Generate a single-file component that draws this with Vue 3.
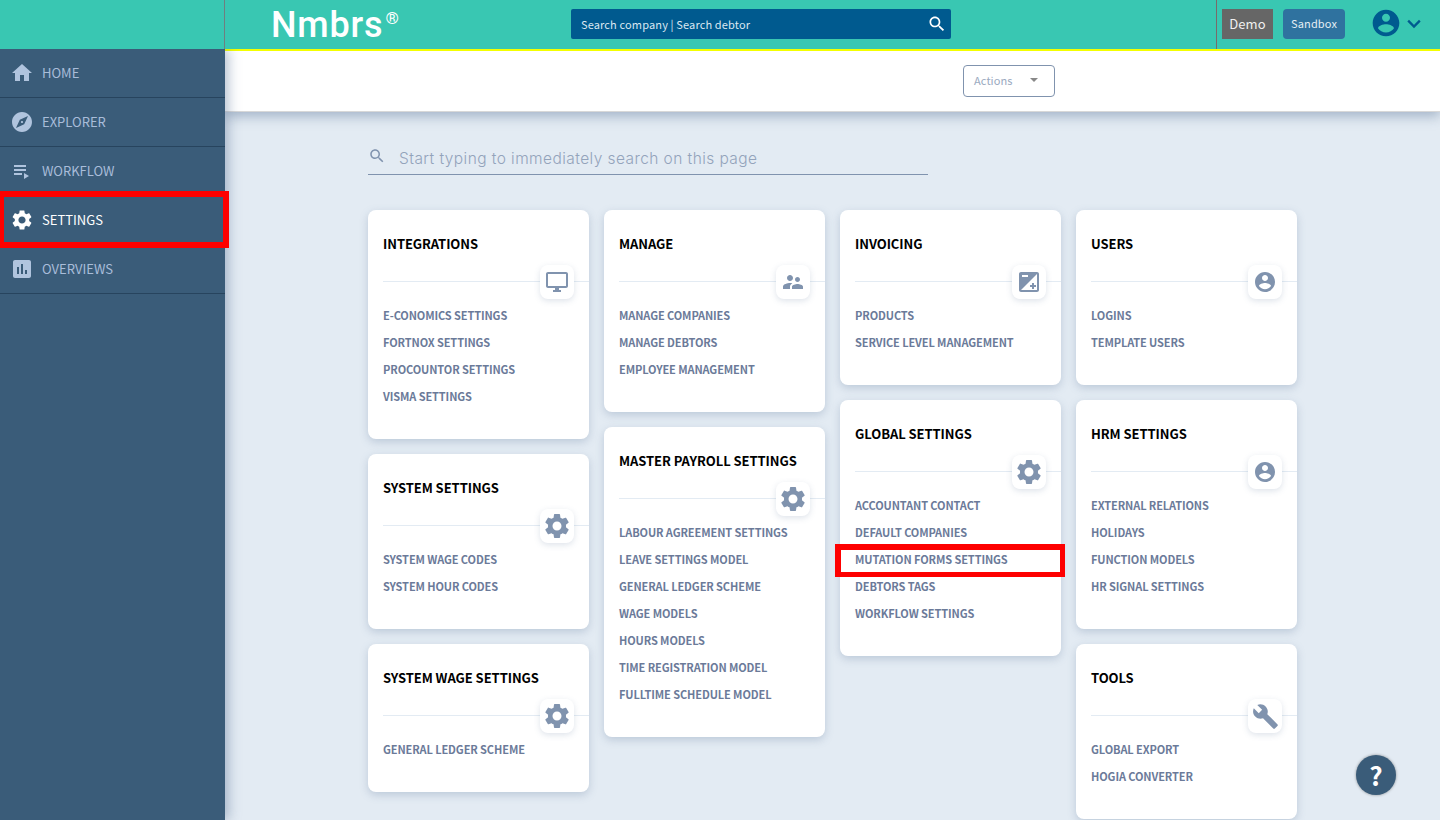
<script setup>
const icons = {
  home: 'M10 20v-6h4v6h5v-8h3L12 3 2 12h3v8z',
  explore: 'M12 10.9c-.61 0-1.1.49-1.1 1.1s.49 1.1 1.1 1.1c.61 0 1.1-.49 1.1-1.1s-.49-1.1-1.1-1.1zM12 2C6.48 2 2 6.48 2 12s4.48 10 10 10 10-4.48 10-10S17.52 2 12 2zm2.19 12.19L6 18l3.81-8.19L18 6l-3.81 8.19z',
  playlist: 'M4 10h12v2H4zm0-4h12v2H4zm0 8h8v2H4zm10 0v6l5-3z',
  settings: 'M19.14 12.94c.04-.3.06-.61.06-.94 0-.32-.02-.64-.07-.94l2.03-1.58c.18-.14.23-.41.12-.61l-1.92-3.32c-.12-.22-.37-.29-.59-.22l-2.39.96c-.5-.38-1.03-.7-1.62-.94l-.36-2.54c-.04-.24-.24-.41-.48-.41h-3.84c-.24 0-.43.17-.47.41l-.36 2.54c-.59.24-1.13.57-1.62.94l-2.39-.96c-.22-.08-.47 0-.59.22L2.74 8.87c-.12.21-.08.47.12.61l2.03 1.58c-.05.3-.09.63-.09.94s.02.64.07.94l-2.03 1.58c-.18.14-.23.41-.12.61l1.92 3.32c.12.22.37.29.59.22l2.39-.96c.5.38 1.03.7 1.62.94l.36 2.54c.05.24.24.41.48.41h3.84c.24 0 .44-.17.47-.41l.36-2.54c.59-.24 1.13-.56 1.62-.94l2.39.96c.22.08.47 0 .59-.22l1.92-3.32c.12-.22.07-.47-.12-.61l-2.01-1.58zM12 15.6c-1.98 0-3.6-1.62-3.6-3.6s1.62-3.6 3.6-3.6 3.6 1.62 3.6 3.6-1.62 3.6-3.6 3.6z',
  chart: 'M19 3H5c-1.1 0-2 .9-2 2v14c0 1.1.9 2 2 2h14c1.1 0 2-.9 2-2V5c0-1.1-.9-2-2-2zM9 17H7v-7h2v7zm4 0h-2V7h2v10zm4 0h-2v-4h2v4z',
  desktop: 'M21 2H3c-1.1 0-2 .9-2 2v12c0 1.1.9 2 2 2h7v2H8v2h8v-2h-2v-2h7c1.1 0 2-.9 2-2V4c0-1.1-.9-2-2-2zm0 14H3V4h18v12z',
  people: 'M16.5 12c1.38 0 2.49-1.12 2.49-2.5S17.88 7 16.5 7C15.12 7 14 8.12 14 9.5s1.12 2.5 2.5 2.5zM9 11c1.66 0 2.99-1.34 2.99-3S10.66 5 9 5C7.34 5 6 6.34 6 8s1.34 3 3 3zm7.5 3c-1.83 0-5.5.92-5.5 2.75V19h11v-2.25c0-1.83-3.67-2.75-5.5-2.75zM9 13c-2.33 0-7 1.17-7 3.5V19h7v-2.25c0-.85.33-2.34 2.37-3.47C10.5 13.1 9.66 13 9 13z',
  exposure: 'M15 17v2h2v-2h2v-2h-2v-2h-2v2h-2v2h2zm5-15H4c-1.1 0-2 .9-2 2v16c0 1.1.9 2 2 2h16c1.1 0 2-.9 2-2V4c0-1.1-.9-2-2-2zM5 5h6v2H5V5zm15 15H4L20 4v16z',
  account: 'M12 2C6.48 2 2 6.48 2 12s4.48 10 10 10 10-4.48 10-10S17.52 2 12 2zm0 3c1.66 0 3 1.34 3 3s-1.34 3-3 3-3-1.34-3-3 1.34-3 3-3zm0 14.2c-2.5 0-4.71-1.28-6-3.22.03-1.99 4-3.08 6-3.08 1.99 0 5.97 1.09 6 3.08-1.29 1.94-3.5 3.22-6 3.22z',
  build: 'M22.7 19l-9.1-9.1c.9-2.3.4-5-1.5-6.9-2-2-5-2.4-7.4-1.3L9 6 6 9 1.6 4.7C.4 7.1.9 10.1 2.9 12.1c1.9 1.9 4.6 2.4 6.9 1.5l9.1 9.1c.4.4 1 .4 1.4 0l2.3-2.3c.5-.4.5-1.1.1-1.4z',
  search: 'M15.5 14h-.79l-.28-.27C15.41 12.59 16 11.11 16 9.5 16 5.91 13.09 3 9.5 3S3 5.91 3 9.5 5.91 16 9.5 16c1.61 0 3.09-.59 4.23-1.57l.27.28v.79l5 4.99L20.49 19l-4.99-5zm-6 0C7.01 14 5 11.99 5 9.5S7.01 5 9.5 5 14 7.01 14 9.5 11.99 14 9.5 14z'
}

const nav = [
  { label: 'HOME', icon: 'home' },
  { label: 'EXPLORER', icon: 'explore' },
  { label: 'WORKFLOW', icon: 'playlist' },
  { label: 'SETTINGS', icon: 'settings', active: true },
  { label: 'OVERVIEWS', icon: 'chart' }
]

const columns = [
  [
    { title: 'INTEGRATIONS', icon: 'desktop', links: ['E-CONOMICS SETTINGS', 'FORTNOX SETTINGS', 'PROCOUNTOR SETTINGS', 'VISMA SETTINGS'] },
    { title: 'SYSTEM SETTINGS', icon: 'settings', links: ['SYSTEM WAGE CODES', 'SYSTEM HOUR CODES'] },
    { title: 'SYSTEM WAGE SETTINGS', icon: 'settings', links: ['GENERAL LEDGER SCHEME'] }
  ],
  [
    { title: 'MANAGE', icon: 'people', links: ['MANAGE COMPANIES', 'MANAGE DEBTORS', 'EMPLOYEE MANAGEMENT'] },
    { title: 'MASTER PAYROLL SETTINGS', icon: 'settings', links: ['LABOUR AGREEMENT SETTINGS', 'LEAVE SETTINGS MODEL', 'GENERAL LEDGER SCHEME', 'WAGE MODELS', 'HOURS MODELS', 'TIME REGISTRATION MODEL', 'FULLTIME SCHEDULE MODEL'] }
  ],
  [
    { title: 'INVOICING', icon: 'exposure', links: ['PRODUCTS', 'SERVICE LEVEL MANAGEMENT'] },
    { title: 'GLOBAL SETTINGS', icon: 'settings', links: ['ACCOUNTANT CONTACT', 'DEFAULT COMPANIES', 'MUTATION FORMS SETTINGS', 'DEBTORS TAGS', 'WORKFLOW SETTINGS'], marked: 'MUTATION FORMS SETTINGS' }
  ],
  [
    { title: 'USERS', icon: 'account', links: ['LOGINS', 'TEMPLATE USERS'] },
    { title: 'HRM SETTINGS', icon: 'account', links: ['EXTERNAL RELATIONS', 'HOLIDAYS', 'FUNCTION MODELS', 'HR SIGNAL SETTINGS'] },
    { title: 'TOOLS', icon: 'build', links: ['GLOBAL EXPORT', 'HOGIA CONVERTER'] }
  ]
]
</script>

<template>
  <div class="app">
    <header class="topbar">
      <div class="corner"></div>
      <div class="brand">Nmbrs<sup>®</sup></div>
      <div class="global-search">
        <span>Search company | Search debtor</span>
        <svg viewBox="0 0 24 24" class="gs-icon"><path :d="icons.search" /></svg>
      </div>
      <div class="top-right">
        <span class="demo">Demo</span>
        <span class="sandbox">Sandbox</span>
        <svg viewBox="0 0 24 24" class="avatar"><path :d="icons.account" /></svg>
        <svg viewBox="0 0 24 24" class="chev"><path d="M5 8l7 7 7-7" /></svg>
      </div>
    </header>

    <div class="body">
      <aside class="sidebar">
        <div v-for="item in nav" :key="item.label" class="nav-item" :class="{ active: item.active }">
          <svg viewBox="0 0 24 24" class="nav-icon"><path :d="icons[item.icon]" /></svg>
          <span class="nav-label">{{ item.label }}</span>
          <i v-if="item.active" class="mark mark-nav"></i>
        </div>
      </aside>

      <main class="main">
        <div class="actionbar">
          <div class="actions"><span class="actions-label">Actions</span><i class="caret"></i></div>
        </div>
        <div class="content">
          <div class="page-search">
            <svg viewBox="0 0 24 24" class="ps-icon"><path :d="icons.search" /></svg>
            <span>Start typing to immediately search on this page</span>
          </div>
          <div class="columns">
            <div v-for="(col, i) in columns" :key="i" class="column">
              <section v-for="card in col" :key="card.title" class="card">
                <h3>{{ card.title }}</h3>
                <div class="rule">
                  <span class="badge">
                    <svg viewBox="0 0 24 24" :class="'ic-' + card.icon"><path :d="icons[card.icon]" /></svg>
                  </span>
                </div>
                <ul>
                  <li v-for="l in card.links" :key="l">
                    {{ l }}
                    <i v-if="card.marked === l" class="mark mark-link"></i>
                  </li>
                </ul>
              </section>
            </div>
          </div>
        </div>
        <div class="help">?</div>
      </main>
    </div>
  </div>
</template>

<style>
html, body { margin: 0; padding: 0; overflow: hidden; }
</style>

<style scoped>
.app {
  width: 1440px;
  height: 820px;
  overflow: hidden;
  display: flex;
  flex-direction: column;
  font-family: "Noto Sans CJK SC", "Noto Sans", sans-serif;
  background: #e3ebf3;
}
.topbar {
  height: 49px;
  flex: none;
  display: flex;
  align-items: stretch;
  background: #39c7b2;
  position: relative;
  z-index: 3;
}
.corner {
  width: 224px;
  flex: none;
  border-right: 1px solid #6f7f80;
}
.brand {
  margin-left: 46px;
  width: 300px;
  flex: none;
  font-family: Roboto, "Noto Sans", sans-serif;
  color: #fff;
  font-size: 36px;
  line-height: 50px;
  font-weight: 500;
  letter-spacing: 0.8px;
}
.brand sup {
  font-size: 17px;
  line-height: 0;
  vertical-align: 13px;
  font-weight: 400;
  margin-left: 2px;
  letter-spacing: 0;
}
.global-search {
  width: 380px;
  height: 30px;
  margin-top: 9px;
  flex: none;
  box-sizing: border-box;
  padding: 0 4px 0 10px;
  background: #005a8f;
  border-radius: 2px;
  display: flex;
  align-items: center;
  justify-content: space-between;
  color: #dbe8f2;
  font-size: 11px;
  letter-spacing: 0.14px;
}
.gs-icon { width: 20px; height: 20px; fill: #fff; }
.top-right {
  margin-left: 265px;
  flex: 1;
  display: flex;
  align-items: flex-start;
  border-left: 1px solid #7a6a6a;
  padding: 9px 0 0 5px;
}
.demo {
  width: 51px;
  height: 30px;
  background: #666;
  color: #f0f0f0;
  font-size: 13px;
  line-height: 30px;
  text-align: center;
  letter-spacing: 0.1px;
}
.sandbox {
  width: 62px;
  height: 30px;
  margin-left: 10px;
  background: #2f729f;
  border-radius: 4px;
  color: #e5eef4;
  font-size: 11px;
  line-height: 28px;
  text-align: center;
  letter-spacing: 0.15px;
}
.avatar { width: 32px; height: 32px; margin: -2px 0 0 25px; fill: #005a8f; flex: none; }
.chev {
  width: 20px;
  height: 20px;
  margin: 5px 0 0 2px;
  fill: none;
  stroke: #005a8f;
  stroke-width: 2.8;
  flex: none;
}

.body { flex: 1; display: flex; min-height: 0; }
.sidebar {
  width: 225px;
  flex: none;
  background: #3a5c79;
  box-shadow: 3px 0 12px rgba(60, 90, 130, 0.4);
  position: relative;
  z-index: 2;
}
.nav-item {
  height: 49px;
  box-sizing: border-box;
  border-bottom: 1px solid #27445e;
  display: flex;
  align-items: center;
  padding-left: 10px;
  color: #a9bdd9;
  font-size: 13px;
  letter-spacing: 0;
  position: relative;
}
.nav-label { margin-bottom: 2px; }
.nav-item.active { color: #fff; }
.nav-icon { width: 24px; height: 24px; margin-right: 8px; fill: #b0c4de; flex: none; }
.nav-item.active .nav-icon { fill: #fff; }
.mark { position: absolute; box-sizing: border-box; border: solid #fe0000; pointer-events: none; }
.mark-nav {
  left: 0;
  top: -5px;
  width: 229px;
  height: 57px;
  border-width: 6px 6px 6px 4px;
}
.main {
  flex: 1;
  min-width: 0;
  position: relative;
  overflow: hidden;
  border-top: 2px solid #f4ff00;
}
.actionbar {
  height: 61px;
  box-sizing: border-box;
  background: #fff;
  border-bottom: 1px solid #d8d8d8;
  box-shadow: 0 4px 12px rgba(60, 90, 130, 0.4);
  padding-left: 738px;
  display: flex;
  align-items: center;
  position: relative;
  z-index: 1;
}
.actions {
  width: 92px;
  height: 32px;
  margin-top: -1px;
  box-sizing: border-box;
  border: 1px solid #8093ae;
  border-radius: 4px;
  display: flex;
  align-items: center;
  padding-left: 10px;
  color: #9aa9c0;
  font-size: 11px;
  letter-spacing: 0.1px;
}
.actions-label { margin-bottom: 2px; }
.caret {
  margin: -1px 0 0 17px;
  border-left: 4px solid transparent;
  border-right: 4px solid transparent;
  border-top: 4px solid #888;
}
.content { padding: 0 0 0 143px; }
.page-search {
  width: 560px;
  height: 63px;
  box-sizing: border-box;
  border-bottom: 1px solid #8093ae;
  display: flex;
  align-items: flex-end;
  padding: 0 0 6px 0;
  color: #93a3bb;
  font-family: Inter, "Open Sans", sans-serif;
  font-size: 15.5px;
  font-weight: 300;
  letter-spacing: 0.43px;
}
.ps-icon { width: 18px; height: 18px; fill: #8093ae; margin: 0 13px 3px 0; flex: none; }
.columns { display: flex; gap: 15px; margin-top: 35px; align-items: flex-start; }
.column { width: 221px; display: flex; flex-direction: column; gap: 15px; }
.card {
  background: #fff;
  border-radius: 8px;
  box-shadow: 0 3px 8px rgba(90, 115, 150, 0.28);
  padding: 24px 0 29px 15px;
  box-sizing: border-box;
}
.card h3 {
  margin: 0;
  font-size: 13px;
  line-height: 20px;
  font-weight: 700;
  letter-spacing: -0.07px;
  color: #000;
}
.rule {
  height: 1px;
  margin-top: 27px;
  background: #e3ebf3;
  position: relative;
}
.badge {
  position: absolute;
  right: 15px;
  top: -16px;
  width: 34px;
  height: 34px;
  border-radius: 8px;
  background: #fff;
  box-shadow: 0 2px 6px rgba(90, 115, 150, 0.2);
  display: flex;
  align-items: center;
  justify-content: center;
}
.badge svg { width: 24px; height: 24px; fill: #8093ae; flex: none; }
.badge svg.ic-settings { width: 30px; height: 30px; }
.badge svg.ic-build { width: 27px; height: 27px; }
.card ul { list-style: none; margin: 20px 0 0; padding: 0; }
.card li {
  height: 27px;
  line-height: 27px;
  font-size: 11px;
  font-weight: 600;
  letter-spacing: -0.1px;
  color: #6b7a99;
  position: relative;
}
.mark-link {
  left: -20px;
  top: -2px;
  width: 230px;
  height: 33px;
  border-width: 6px 5px 5px 6px;
}
.help {
  position: absolute;
  left: 1131px;
  top: 704px;
  width: 40px;
  height: 40px;
  border-radius: 50%;
  background: #3a5c79;
  color: #fff;
  font-size: 26px;
  font-weight: 700;
  line-height: 40px;
  text-align: center;
  box-shadow: 0 0 3px rgba(0,0,0,0.4);
}
</style>
